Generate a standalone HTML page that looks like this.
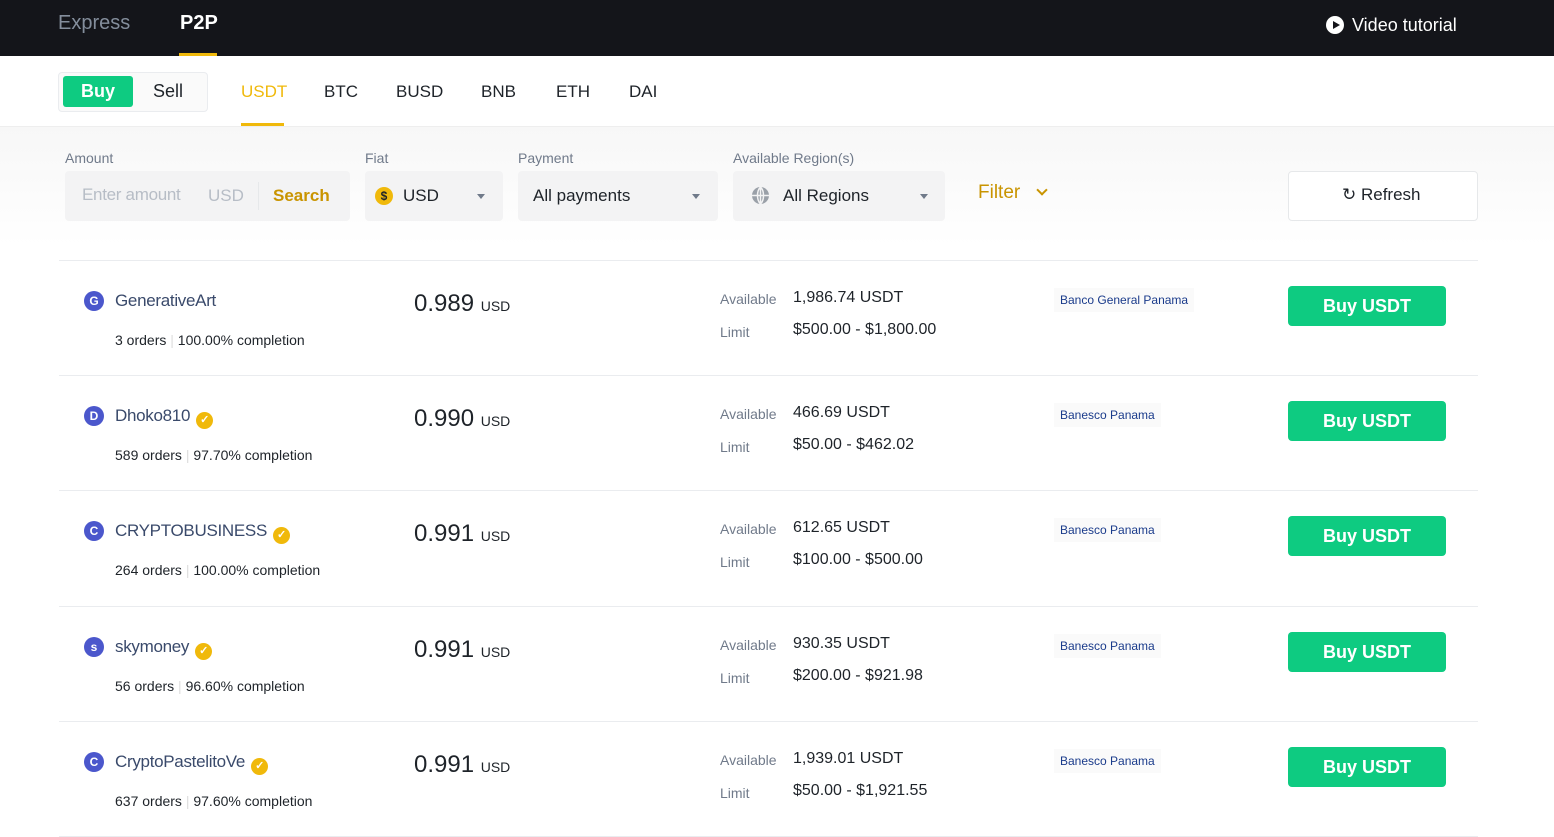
<!DOCTYPE html><html><head><style>
*{box-sizing:border-box;margin:0;padding:0}
body{width:1554px;height:837px;overflow:hidden;background:#fff;font-family:"Liberation Sans",sans-serif;position:relative;color:#1e2329}
.a{position:absolute;white-space:nowrap}
.hdr{position:absolute;left:0;top:0;width:1554px;height:56px;background:#14151a}
.sep{position:absolute;left:59px;width:1419px;height:1px;background:#eaecef}
.av{position:absolute;width:20px;height:20px;border-radius:50%;background:#4b57cc;color:#fff;font-size:12px;text-align:center;line-height:20px;font-weight:bold}
.badge{display:inline-block;vertical-align:-2px;margin-left:6px;width:17px;height:17px;border-radius:50%;background:#f0b90b;color:#fff;font-size:11px;text-align:center;line-height:17px;font-weight:bold}
.nm{letter-spacing:-0.3px}
.btn{position:absolute;left:1288px;width:158px;height:40px;background:#0ecb81;border-radius:4px;color:#fff;font-size:18px;font-weight:bold;text-align:center;line-height:40px}
.tag{position:absolute;left:1054px;height:24px;background:#fafafa;color:#1a3b8b;font-size:12px;line-height:24px;padding:0 6px}
.g{color:#707a8a}
</style></head><body>
<div class="hdr"></div>
<div class="a" style="left:58px;top:12px;font-size:20px;color:#848e9c">Express</div>
<div class="a" style="left:180px;top:12px;font-size:20px;color:#fff;font-weight:bold">P2P</div>
<div class="a" style="left:179px;top:53px;width:38px;height:3px;background:#f0b90b"></div>
<div class="a" style="left:1326px;top:16px;width:18px;height:18px;border-radius:50%;background:#fff"></div>
<div class="a" style="left:1333px;top:21px;width:0;height:0;border-left:7px solid #14151a;border-top:4px solid transparent;border-bottom:4px solid transparent"></div>
<div class="a" style="left:1352px;top:15px;font-size:18px;color:#fff">Video tutorial</div>
<div class="a" style="left:58px;top:72px;width:150px;height:40px;border:1px solid #eaecef;border-radius:4px;background:#fafafa"></div>
<div class="a" style="left:63px;top:76px;width:70px;height:31px;background:#0ecb81;border-radius:3px;color:#fff;font-weight:bold;font-size:18px;text-align:center;line-height:31px">Buy</div>
<div class="a" style="left:153px;top:81px;font-size:18px">Sell</div>
<div class="a" style="left:241px;top:82px;font-size:17px;color:#f0b90b">USDT</div>
<div class="a" style="left:241px;top:123px;width:43px;height:3px;background:#f0b90b"></div>
<div class="a" style="left:324px;top:82px;font-size:17px">BTC</div>
<div class="a" style="left:396px;top:82px;font-size:17px">BUSD</div>
<div class="a" style="left:481px;top:82px;font-size:17px">BNB</div>
<div class="a" style="left:556px;top:82px;font-size:17px">ETH</div>
<div class="a" style="left:629px;top:82px;font-size:17px">DAI</div>
<div class="a" style="left:0;top:126px;width:1554px;height:120px;background:linear-gradient(#f7f7f7,#fff);border-top:1px solid #eee"></div>
<div class="a g" style="left:65px;top:150px;font-size:14px">Amount</div>
<div class="a" style="left:65px;top:171px;width:285px;height:50px;background:#f3f3f4;border-radius:4px"></div>
<div class="a" style="left:82px;top:185px;font-size:17px;color:#b7bdc6;letter-spacing:-0.3px">Enter amount</div>
<div class="a" style="left:208px;top:186px;font-size:17px;color:#b7bdc6">USD</div>
<div class="a" style="left:258px;top:182px;width:1px;height:28px;background:#e6e8ea"></div>
<div class="a" style="left:273px;top:186px;font-size:17px;color:#c99400;font-weight:bold">Search</div>
<div class="a g" style="left:365px;top:150px;font-size:14px">Fiat</div>
<div class="a" style="left:365px;top:171px;width:138px;height:50px;background:#f3f3f4;border-radius:4px"></div>
<div class="a" style="left:375px;top:187px;width:18px;height:18px;border-radius:50%;background:#f0b90b;font-size:12px;text-align:center;line-height:18px;font-weight:bold">$</div>
<div class="a" style="left:403px;top:186px;font-size:17px">USD</div>
<div class="a" style="left:477px;top:194px;border-top:5px solid #707a8a;border-left:4px solid transparent;border-right:4px solid transparent"></div>
<div class="a g" style="left:518px;top:150px;font-size:14px">Payment</div>
<div class="a" style="left:518px;top:171px;width:200px;height:50px;background:#f3f3f4;border-radius:4px"></div>
<div class="a" style="left:533px;top:186px;font-size:17px">All payments</div>
<div class="a" style="left:692px;top:194px;border-top:5px solid #707a8a;border-left:4px solid transparent;border-right:4px solid transparent"></div>
<div class="a g" style="left:733px;top:150px;font-size:14px">Available Region(s)</div>
<div class="a" style="left:733px;top:171px;width:212px;height:50px;background:#f3f3f4;border-radius:4px"></div>
<svg class="a" style="left:751px;top:186px" width="19" height="19" viewBox="0 0 19 19"><circle cx="9.5" cy="9.5" r="8.5" fill="#9aa0a8"/><path d="M9.5 1v17M1 9.5h17M9.5 1c-4 4-4 13 0 17M9.5 1c4 4 4 13 0 17" stroke="#f3f3f4" stroke-width="1.5" fill="none"/></svg>
<div class="a" style="left:783px;top:186px;font-size:17px">All Regions</div>
<div class="a" style="left:920px;top:194px;border-top:5px solid #707a8a;border-left:4px solid transparent;border-right:4px solid transparent"></div>
<div class="a" style="left:978px;top:182px;font-size:19px;color:#c99400">Filter</div>
<div class="a" style="left:1038px;top:186px;width:8px;height:8px;border-right:2px solid #c99400;border-bottom:2px solid #c99400;transform:rotate(45deg)"></div>
<div class="a" style="left:1288px;top:171px;width:190px;height:50px;border:1px solid #e6e8ea;border-radius:4px;background:#fff"></div>
<div class="a" style="left:1342px;top:185px;font-size:17px">↻ Refresh</div>
<div class="sep" style="top:260px"></div>
<div class="sep" style="top:375px"></div>
<div class="sep" style="top:490px"></div>
<div class="sep" style="top:606px"></div>
<div class="sep" style="top:721px"></div>
<div class="sep" style="top:836px"></div>

<div class="av" style="left:84px;top:291px">G</div>
<div class="a nm" style="left:115px;top:291px;font-size:17px;color:#3a4a6b">GenerativeArt</div>
<div class="a" style="left:115px;top:332px;font-size:14px">3 orders <span style="color:#ddd">|</span> 100.00% completion</div>
<div class="a" style="left:414px;top:290px;font-size:24px">0.989 <span style="font-size:14px">USD</span></div>
<div class="a g" style="left:720px;top:291px;font-size:14px">Available</div>
<div class="a" style="left:793px;top:289px;font-size:16px">1,986.74 USDT</div>
<div class="a g" style="left:720px;top:324px;font-size:14px">Limit</div>
<div class="a" style="left:793px;top:321px;font-size:16px">$500.00 - $1,800.00</div>
<div class="tag" style="top:288px">Banco General Panama</div>
<div class="btn" style="top:286px">Buy USDT</div>

<div class="av" style="left:84px;top:406px">D</div>
<div class="a nm" style="left:115px;top:406px;font-size:17px;color:#3a4a6b">Dhoko810<span class="badge">✓</span></div>
<div class="a" style="left:115px;top:447px;font-size:14px">589 orders <span style="color:#ddd">|</span> 97.70% completion</div>
<div class="a" style="left:414px;top:405px;font-size:24px">0.990 <span style="font-size:14px">USD</span></div>
<div class="a g" style="left:720px;top:406px;font-size:14px">Available</div>
<div class="a" style="left:793px;top:404px;font-size:16px">466.69 USDT</div>
<div class="a g" style="left:720px;top:439px;font-size:14px">Limit</div>
<div class="a" style="left:793px;top:436px;font-size:16px">$50.00 - $462.02</div>
<div class="tag" style="top:403px">Banesco Panama</div>
<div class="btn" style="top:401px">Buy USDT</div>

<div class="av" style="left:84px;top:521px">C</div>
<div class="a nm" style="left:115px;top:521px;font-size:17px;color:#3a4a6b">CRYPTOBUSINESS<span class="badge">✓</span></div>
<div class="a" style="left:115px;top:562px;font-size:14px">264 orders <span style="color:#ddd">|</span> 100.00% completion</div>
<div class="a" style="left:414px;top:520px;font-size:24px">0.991 <span style="font-size:14px">USD</span></div>
<div class="a g" style="left:720px;top:521px;font-size:14px">Available</div>
<div class="a" style="left:793px;top:519px;font-size:16px">612.65 USDT</div>
<div class="a g" style="left:720px;top:554px;font-size:14px">Limit</div>
<div class="a" style="left:793px;top:551px;font-size:16px">$100.00 - $500.00</div>
<div class="tag" style="top:518px">Banesco Panama</div>
<div class="btn" style="top:516px">Buy USDT</div>

<div class="av" style="left:84px;top:637px">s</div>
<div class="a nm" style="left:115px;top:637px;font-size:17px;color:#3a4a6b">skymoney<span class="badge">✓</span></div>
<div class="a" style="left:115px;top:678px;font-size:14px">56 orders <span style="color:#ddd">|</span> 96.60% completion</div>
<div class="a" style="left:414px;top:636px;font-size:24px">0.991 <span style="font-size:14px">USD</span></div>
<div class="a g" style="left:720px;top:637px;font-size:14px">Available</div>
<div class="a" style="left:793px;top:635px;font-size:16px">930.35 USDT</div>
<div class="a g" style="left:720px;top:670px;font-size:14px">Limit</div>
<div class="a" style="left:793px;top:667px;font-size:16px">$200.00 - $921.98</div>
<div class="tag" style="top:634px">Banesco Panama</div>
<div class="btn" style="top:632px">Buy USDT</div>

<div class="av" style="left:84px;top:752px">C</div>
<div class="a nm" style="left:115px;top:752px;font-size:17px;color:#3a4a6b">CryptoPastelitoVe<span class="badge">✓</span></div>
<div class="a" style="left:115px;top:793px;font-size:14px">637 orders <span style="color:#ddd">|</span> 97.60% completion</div>
<div class="a" style="left:414px;top:751px;font-size:24px">0.991 <span style="font-size:14px">USD</span></div>
<div class="a g" style="left:720px;top:752px;font-size:14px">Available</div>
<div class="a" style="left:793px;top:750px;font-size:16px">1,939.01 USDT</div>
<div class="a g" style="left:720px;top:785px;font-size:14px">Limit</div>
<div class="a" style="left:793px;top:782px;font-size:16px">$50.00 - $1,921.55</div>
<div class="tag" style="top:749px">Banesco Panama</div>
<div class="btn" style="top:747px">Buy USDT</div>
</body></html>
